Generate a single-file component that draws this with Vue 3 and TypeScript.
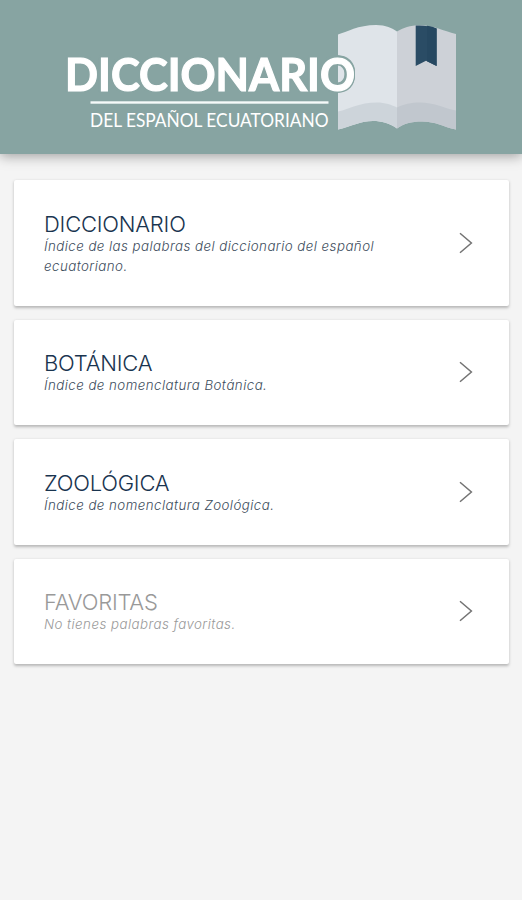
<script setup lang="ts">
interface Entry {
  title: string
  text: string
  muted?: boolean
  tall?: boolean
}

const entries: Entry[] = [
  { title: 'DICCIONARIO', text: 'Índice de las palabras del diccionario del español ecuatoriano.', tall: true },
  { title: 'BOTÁNICA', text: 'Índice de nomenclatura Botánica.' },
  { title: 'ZOOLÓGICA', text: 'Índice de nomenclatura Zoológica.' },
  { title: 'FAVORITAS', text: 'No tienes palabras favoritas.', muted: true },
]
</script>

<template>
  <div class="page">
    <header class="header">
      <svg class="logo" viewBox="0 0 522 154" width="522" height="154">
        <path d="M338 34.5C347 32 358 25 376 25C386 25 392 28 397 31.5V128.5C389 123 382 121 373 121C361 121 352 126 338 129.5Z" fill="#dfe4e9" />
        <path d="M397 31.5C403 28 410 25.3 420 25.3C434 25.3 443 31 456 34V129.5C443 127 436 121.5 422 121.5C411 121.5 403 124 397 128.5Z" fill="#cdd1d7" />
        <path d="M338 111.5C350 109 359 102.5 377 102.5C385 102.5 392 105 397 107.5V128.5C389 123 382 121 373 121C361 121 352 126 338 129.5Z" fill="#cdd4da" />
        <path d="M397 107.5C404 104 411 102.5 420 102.5C434 102.5 443 108 456 110.5V129.5C443 127 436 121.5 422 121.5C411 121.5 403 124 397 128.5Z" fill="#c1c7ce" />
        <path d="M415.7 25.5C423 25 430 26 436.6 28.5V66L426 60.8L415.7 66Z" fill="#2a4c65" />
        <path d="M427 25.7C431 26.2 434 27.2 436.6 28.5V66L427 61.3Z" fill="#264861" />
        <text class="name" x="65" y="91.3" textLength="290" lengthAdjust="spacingAndGlyphs">DICCIONARIO</text>
        <rect x="90.5" y="101.3" width="238" height="2.4" fill="#f5faf9" />
        <text class="subname" x="90" y="127" textLength="238.500" lengthAdjust="spacingAndGlyphs">DEL ESPAÑOL ECUATORIANO</text>
      </svg>
    </header>
    <main class="list">
      <section v-for="e in entries" :key="e.title" class="card" :class="{ muted: e.muted, tall: e.tall }">
        <div class="body">
          <h2 class="title">{{ e.title }}</h2>
          <p class="text">{{ e.text }}</p>
        </div>
        <svg class="chevron" viewBox="0 0 14 22" width="14" height="22">
          <path d="M1 1.200L12.400 11L1 20.800" fill="none" stroke="#737373" stroke-width="1.500" />
        </svg>
      </section>
    </main>
  </div>
</template>

<style>
body {
  background: #f4f4f4;
}
</style>

<style scoped>
.page {
  min-height: 900px;
  background: #f4f4f4;
  font-family: Inter, "Liberation Sans", sans-serif;
}
.header {
  height: 154px;
  background: #87a4a2;
  box-shadow: 0 2px 12px rgba(0, 0, 0, 0.36);
}
.logo {
  display: block;
}
.name {
  font: 700 45px Lato, sans-serif;
  fill: #fff;
  stroke: #fff;
  stroke-width: 1.2px;
  filter: drop-shadow(1.3px 0 0 #87a4a2) drop-shadow(-1.3px 0 0 #87a4a2) drop-shadow(0 1.2px 0 #87a4a2) drop-shadow(0 -1.2px 0 #87a4a2);
}
.subname {
  font: 400 19px Lato, sans-serif;
  fill: #fff;
}
.list {
  display: flex;
  flex-direction: column;
  gap: 14px;
  padding: 26px 13px 0 14px;
}
.card {
  box-sizing: border-box;
  height: 105.5px;
  display: flex;
  align-items: center;
  justify-content: space-between;
  padding: 0 36px 0 30px;
  background: #fff;
  border-radius: 2px;
  box-shadow: 0 1.5px 3px rgba(0, 0, 0, 0.25);
}
.card.tall {
  height: 125.5px;
}
.body {
  width: 350px;
  padding-top: 2px;
  color: #19344f;
}
.title {
  margin: 0;
  font-size: 22px;
  line-height: 24px;
  font-weight: 300;
  letter-spacing: -0.22px;
}
.text {
  margin: 0;
  font-size: 13.300px;
  line-height: 20px;
  font-weight: 300;
  font-style: italic;
  letter-spacing: 0.46px;
  color: #3c4c5c;
}
.muted .title,
.muted .text {
  color: #999;
}
</style>
